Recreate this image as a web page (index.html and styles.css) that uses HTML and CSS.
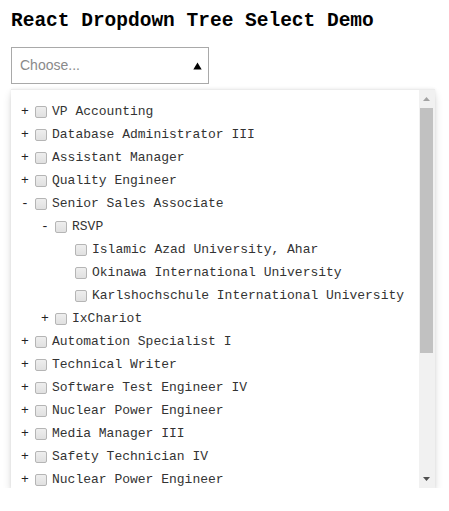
FILE: index.html
```html
<!DOCTYPE html>
<html>
<head>
<meta charset="utf-8">
<link rel="stylesheet" href="styles.css">
</head>
<body>
<div class="page">
  <h2 class="title">React Dropdown Tree Select Demo</h2>
  <div class="trigger">
    <span class="placeholder">Choose...</span>
    <svg class="caret" width="9" height="8" viewBox="0 0 9 8"><path d="M4.5 0.5 L8.7 7.5 L0.3 7.5 Z" fill="#000"/></svg>
  </div>
  <div class="panel">
    <ul class="tree">
      <li class="node"><span class="toggle">+</span><span class="check"></span><span class="label">VP Accounting</span></li>
      <li class="node"><span class="toggle">+</span><span class="check"></span><span class="label">Database Administrator III</span></li>
      <li class="node"><span class="toggle">+</span><span class="check"></span><span class="label">Assistant Manager</span></li>
      <li class="node"><span class="toggle">+</span><span class="check"></span><span class="label">Quality Engineer</span></li>
      <li class="node"><span class="toggle">-</span><span class="check"></span><span class="label">Senior Sales Associate</span></li>
      <li class="node lvl2"><span class="toggle">-</span><span class="check"></span><span class="label">RSVP</span></li>
      <li class="node lvl3"><span class="toggle"></span><span class="check"></span><span class="label">Islamic Azad University, Ahar</span></li>
      <li class="node lvl3"><span class="toggle"></span><span class="check"></span><span class="label">Okinawa International University</span></li>
      <li class="node lvl3"><span class="toggle"></span><span class="check"></span><span class="label">Karlshochschule International University</span></li>
      <li class="node lvl2"><span class="toggle">+</span><span class="check"></span><span class="label">IxChariot</span></li>
      <li class="node"><span class="toggle">+</span><span class="check"></span><span class="label">Automation Specialist I</span></li>
      <li class="node"><span class="toggle">+</span><span class="check"></span><span class="label">Technical Writer</span></li>
      <li class="node"><span class="toggle">+</span><span class="check"></span><span class="label">Software Test Engineer IV</span></li>
      <li class="node"><span class="toggle">+</span><span class="check"></span><span class="label">Nuclear Power Engineer</span></li>
      <li class="node"><span class="toggle">+</span><span class="check"></span><span class="label">Media Manager III</span></li>
      <li class="node"><span class="toggle">+</span><span class="check"></span><span class="label">Safety Technician IV</span></li>
      <li class="node"><span class="toggle">+</span><span class="check"></span><span class="label">Nuclear Power Engineer</span></li>
    </ul>
    <div class="scrollbar">
      <div class="sb-btn"><svg width="7" height="4" viewBox="0 0 7 4"><path d="M3.5 0 L7 4 L0 4 Z" fill="#a3a3a3"/></svg></div>
      <div class="sb-track">
        <div class="sb-thumb"></div>
      </div>
      <div class="sb-btn"><svg width="7" height="4" viewBox="0 0 7 4"><path d="M0 0 L7 0 L3.5 4 Z" fill="#505050"/></svg></div>
    </div>
  </div>
</div>
</body>
</html>
```

FILE: styles.css
```css
* { box-sizing: border-box; }
html, body { margin: 0; padding: 0; background: #fff; }
.page {
  padding: 10px 0 0 11px;
  font-family: "Liberation Mono", "Courier New", monospace;
}
.title {
  margin: 0;
  font-size: 19.5px;
  line-height: 22px;
  font-weight: bold;
  color: #000;
  letter-spacing: 0;
}
.trigger {
  margin-top: 15px;
  width: 198px;
  height: 37px;
  border: 1px solid #a9a9a9;
  display: flex;
  align-items: center;
  justify-content: space-between;
  padding: 0 6px 0 8px;
}
.placeholder {
  font-family: "Liberation Sans", Arial, sans-serif;
  font-size: 14px;
  color: #8a8a8a;
  margin-top: -2px;
}
.caret { margin-top: 1px; }
.panel {
  margin-top: 5px;
  width: 424px;
  height: 399px;
  display: flex;
  background: #fff;
  border-top: 1px solid #ececec;
  box-shadow: 0 0 3px rgba(0,0,0,0.08), 0 5px 8px rgba(0,0,0,0.14);
  overflow: hidden;
}
.tree {
  flex: 1;
  list-style: none;
  margin: 0;
  padding: 10px 0 0 9px;
  overflow: hidden;
}
.node {
  display: flex;
  align-items: center;
  height: 23px;
  font-size: 13px;
  color: #333;
  white-space: nowrap;
}
.lvl2 { padding-left: 20px; }
.lvl3 { padding-left: 40px; }
.toggle {
  width: 10px;
  margin-right: 5px;
  text-align: center;
  font-family: "Liberation Mono", monospace;
  font-size: 13px;
  color: #222;
}
.check {
  width: 12px;
  height: 12px;
  margin-right: 5px;
  border: 1px solid #b5b5b5;
  border-radius: 2px;
  background: linear-gradient(#eeeeee, #e0e0e0);
  flex: none;
}
.label { line-height: 23px; }
.scrollbar {
  width: 16px;
  flex: none;
  background: #f1f1f1;
  display: flex;
  flex-direction: column;
}
.sb-btn {
  height: 18px;
  display: flex;
  align-items: center;
  justify-content: center;
  padding-right: 1px;
}
.sb-track {
  flex: 1;
  padding: 0 2px 0 1px;
}
.sb-thumb {
  height: 245px;
  background: #c1c1c1;
}
```
